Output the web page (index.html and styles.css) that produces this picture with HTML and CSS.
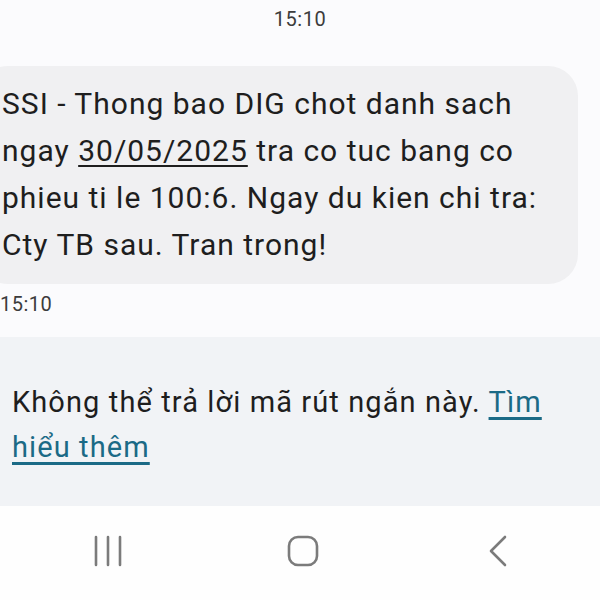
FILE: index.html
```html
<!DOCTYPE html>
<html lang="vi">
<head>
    <meta charset="UTF-8">
    <meta name="viewport" content="width=device-width, initial-scale=1.0">
    <title>Tin nhắn</title>
    <link rel="stylesheet" href="styles.css">
</head>
<body>
    <div class="chat">
        <p class="ora-centro">15:10</p>

        <div class="bolla">
            SSI - Thong bao DIG chot danh sach<br>
            ngay <u>30/05/2025</u> tra co tuc bang co<br>
            phieu ti le 100:6. Ngay du kien chi tra:<br>
            Cty TB sau. Tran trong!
        </div>
        <p class="ora-messaggio">15:10</p>
    </div>

    <div class="avviso">
        <p>Không thể trả lời mã rút ngắn này. <a href="#">Tìm<br>hiểu thêm</a></p>
    </div>

    <nav class="barra-nav">
        <!-- app recenti -->
        <svg width="30" height="32" viewBox="0 0 30 32">
            <path d="M3 2v28M15 2v28M27 2v28" stroke="#7b7b7b" stroke-width="2.6" stroke-linecap="round"/>
        </svg>
        <!-- home -->
        <svg width="32" height="32" viewBox="0 0 32 32">
            <rect x="2" y="2" width="28" height="28" rx="9" fill="none" stroke="#7b7b7b" stroke-width="2.6"/>
        </svg>
        <!-- indietro -->
        <svg width="20" height="32" viewBox="0 0 20 32">
            <path d="M17 2L3 16l14 14" fill="none" stroke="#7b7b7b" stroke-width="2.6" stroke-linecap="round" stroke-linejoin="round"/>
        </svg>
    </nav>
</body>
</html>
```

FILE: styles.css
```css
* {
    box-sizing: border-box;
}

body {
    margin: 0;
    height: 600px;
    display: flex;
    flex-direction: column;
    font-family: Roboto, "Noto Sans", sans-serif;
    background-color: #fbfbfd;
    color: #1e1e1e;
    overflow: hidden;
}

.chat {
    flex: 1;
}

.ora-centro {
    margin: 7px 0 0 0;
    text-align: center;
    font-size: 20px;
    letter-spacing: 0.5px;
    color: #3c3c3c;
}

.bolla {
    width: 600px;
    margin: 35px 0 0 -22px;    /*la bolla esce dal bordo sinistro*/
    padding: 14px 22px 16px 24px;
    background-color: #f0f0f2;
    border-radius: 30px;
    font-size: 30px;
    letter-spacing: 1px;
    line-height: 47px;
    white-space: nowrap;
}

.bolla u {
    text-decoration-thickness: 2px;
    text-underline-offset: 4px;
}

.ora-messaggio {
    margin: 8px 0 0 0;
    font-size: 20px;
    letter-spacing: 0.5px;
    color: #3c3c3c;
}

.avviso {
    height: 169px;
    padding: 6px 12px 0 12px;
    background-color: #f1f3f6;
    display: flex;
    align-items: center;
}

.avviso p {
    margin: 0;
    font-size: 29px;
    letter-spacing: 1.1px;
    line-height: 45px;
    white-space: nowrap;
}

.avviso a {
    color: #1b6a86;
    text-decoration-thickness: 3px;
    text-underline-offset: 5px;
}

.barra-nav {
    height: 94px;
    background-color: #fefefe;
    display: grid;
    grid-template-columns: repeat(3, 1fr);
    justify-items: center;
    align-items: center;
    padding: 0 4px 4px 10px;
}
```
